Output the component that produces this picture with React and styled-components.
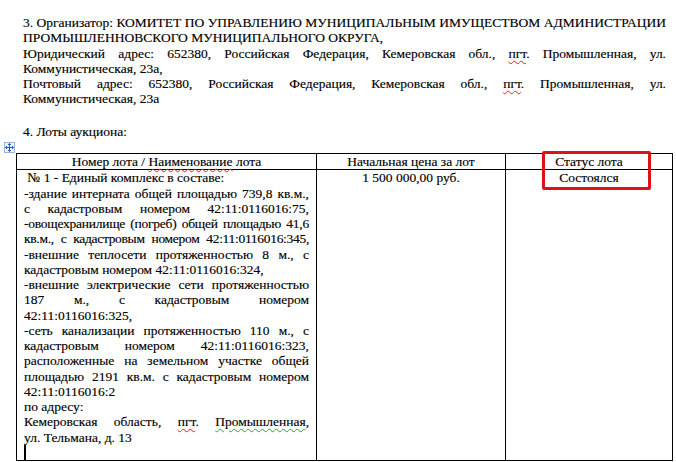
import React from 'react'
import styled, {createGlobalStyle} from 'styled-components'

const Global = createGlobalStyle`
    html, body {
        margin: 0;
        padding: 0;
        background: #fff;
    }
    body {
        font-family: "Liberation Serif", "Times New Roman", serif;
        font-size: 13.5px;
        color: #000;
    }
`;

const Document = styled.div`
    width: 676px;
    box-sizing: border-box;
    padding: 15px 4px 0 16px;
    -webkit-text-stroke: 0.15px #000;
`;

const Section = styled.div`
    padding: 0 6px 0 7px;
`;

const Line = styled.div`
    line-height: 15.25px;
    height: 15.25px;
    white-space: nowrap;
    text-align: ${p => p.$align || 'left'};
    text-align-last: ${p => p.$align || 'left'};
    letter-spacing: ${p => p.$tight ? `-${p.$tight}px` : 'normal'};
`;

const Blank = styled.div`
    height: 17.3px;
`;

const Spell = styled.span`
    text-decoration: underline wavy ${p => p.$kind === 'grammar' ? '#3a9a3a' : '#e0201a'};
    text-decoration-thickness: 1px;
    text-underline-offset: 2px;
`;

const TableWrap = styled.div`
    position: relative;
    margin-top: 14px;
`;

const MoveHandle = styled.div`
    position: absolute;
    left: -12px;
    top: -11px;
    width: 11px;
    height: 11px;
    box-sizing: border-box;
    border: 1px solid #9fb3d1;
    background: #eef3fb;
    display: flex;
    align-items: center;
    justify-content: center;
`;

const Highlight = styled.div`
    position: absolute;
    left: 526px;
    top: -2px;
    width: 109px;
    height: 39px;
    box-sizing: border-box;
    border: 3px solid #dd1119;
    border-radius: 2px;
    pointer-events: none;
`;

const Table = styled.table`
    width: 656px;
    table-layout: fixed;
    border-collapse: collapse;
`;

const Col = styled.col`
    width: ${p => p.$w}px;
`;

const TH = styled.th`
    font-weight: normal;
    border: 1px solid #000;
    padding: 0 7px;
    line-height: 15.25px;
    text-align: center;
    vertical-align: top;
`;

const TD = styled.td`
    border: 1px solid #000;
    padding: 0 7px;
    vertical-align: top;
    text-align: ${p => p.$align || 'left'};
    line-height: 15.25px;
`;

const Caret = styled.span`
    display: inline-block;
    width: 2px;
    height: 15px;
    background: #000;
    vertical-align: top;
`;

const lotLines = [
    {t: '\u00a0№ 1 - Единый комплекс в составе:'},
    {t: '-здание интерната общей площадью 739,8 кв.м.,', j: true},
    {t: 'с кадастровым номером 42:11:0116016:75,', j: true},
    {t: '-овощехранилище (погреб) общей площадью 41,6', j: true, tight: 0.25},
    {t: 'кв.м.,  с кадастровым номером 42:11:0116016:345,', j: true, tight: 0.3},
    {t: '-внешние теплосети протяженностью 8 м., с', j: true},
    {t: 'кадастровым номером 42:11:0116016:324,'},
    {t: '-внешние электрические сети протяженностью', j: true},
    {t: '187 м., с кадастровым номером', j: true},
    {t: '42:11:0116016:325,'},
    {t: '-сеть канализации протяженностью 110 м., с', j: true},
    {t: 'кадастровым номером 42:11:0116016:323,', j: true},
    {t: 'расположенные на земельном участке общей', j: true},
    {t: 'площадью 2191 кв.м. с кадастровым номером', j: true},
    {t: '42:11:0116016:2'},
    {t: 'по адресу:'},
]

const App = () => {
    return (
        <>
            <Global />
            <Document>
                <Section>
                    <Line $align="justify">3.  Организатор: КОМИТЕТ ПО УПРАВЛЕНИЮ МУНИЦИПАЛЬНЫМ ИМУЩЕСТВОМ АДМИНИСТРАЦИИ</Line>
                    <Line>ПРОМЫШЛЕННОВСКОГО МУНИЦИПАЛЬНОГО ОКРУГА,</Line>
                    <Line $align="justify">Юридический адрес: 652380, Российская Федерация, Кемеровская обл., <Spell>пгт</Spell>. Промышленная, ул.</Line>
                    <Line>Коммунистическая, 23а,</Line>
                    <Line $align="justify">Почтовый адрес: 652380, Российская Федерация, Кемеровская обл., <Spell>пгт</Spell>. Промышленная, ул.</Line>
                    <Line>Коммунистическая, 23а</Line>
                    <Blank />
                    <Line>4. Лоты аукциона:</Line>
                </Section>

                <TableWrap>
                    <MoveHandle>
                        <svg width="9" height="9" viewBox="0 0 9 9" fill="none" stroke="#2f5fb0" strokeWidth="1">
                            <path d="M4.5 0.5v8M0.5 4.5h8" />
                            <path d="M3 2L4.5 0.5L6 2M3 7L4.5 8.5L6 7M2 3L0.5 4.5L2 6M7 3L8.5 4.5L7 6" />
                        </svg>
                    </MoveHandle>
                    <Table>
                        <colgroup>
                            <Col $w={300} />
                            <Col $w={189} />
                            <Col $w={167} />
                        </colgroup>
                        <thead>
                            <tr>
                                <TH>Номер лота / <Spell>Наименование</Spell> лота</TH>
                                <TH>Начальная цена за лот</TH>
                                <TH>Статус лота</TH>
                            </tr>
                        </thead>
                        <tbody>
                            <tr>
                                <TD>
                                    {lotLines.map((l, i) => (
                                        <Line key={i} $align={l.j ? 'justify' : 'left'} $tight={l.tight}>{l.t}</Line>
                                    ))}
                                    <Line $align="justify">Кемеровская область, <Spell>пгт</Spell>. <Spell $kind="grammar">Промышленная</Spell>,</Line>
                                    <Line>ул. Тельмана, д. 13</Line>
                                    <Line><Caret /></Line>
                                </TD>
                                <TD $align="center">1 500 000,00 руб.</TD>
                                <TD $align="center">Состоялся</TD>
                            </tr>
                        </tbody>
                    </Table>
                    <Highlight />
                </TableWrap>
            </Document>
        </>
    )
}

export default App
